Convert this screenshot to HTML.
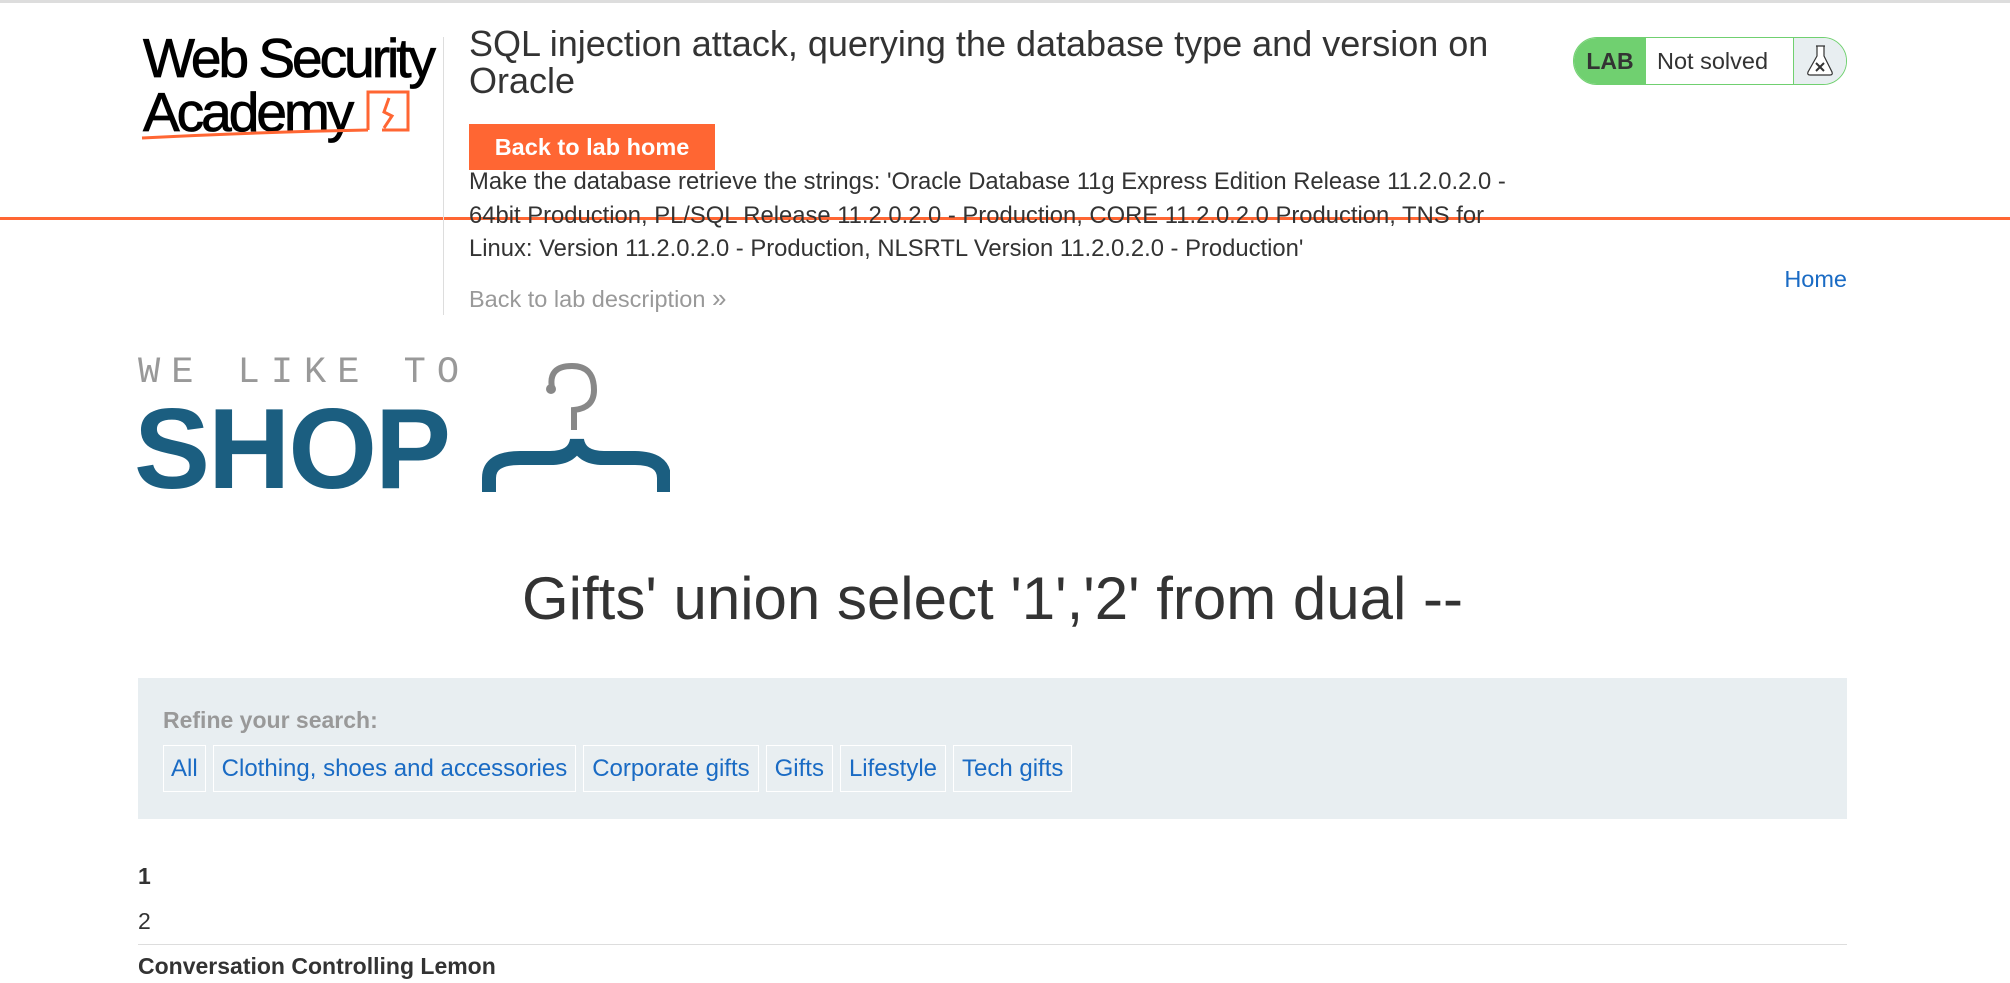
<!DOCTYPE html>
<html><head><meta charset="utf-8"><style>
*{margin:0;padding:0;box-sizing:border-box}
body{width:2010px;height:983px;overflow:hidden;background:#fff;font-family:"Liberation Sans",Arial,sans-serif;color:#333;position:relative}
.a{position:absolute;white-space:nowrap}
</style></head><body>
<div class="a" style="left:0;top:0;width:2010px;height:3px;background:#ddd"></div>
<div class="a" style="left:0;top:217px;width:2010px;height:3px;background:#ff6633"></div>
<!-- WSA logo -->
<div class="a" style="left:143px;top:30px;font-size:55px;letter-spacing:-3px;color:#000;line-height:56px;-webkit-text-stroke:0.8px #000">Web Security</div>
<div class="a" style="left:143px;top:84px;font-size:55px;letter-spacing:-3px;color:#000;line-height:56px;-webkit-text-stroke:0.8px #000">Academy</div>
<svg class="a" style="left:140px;top:86px" width="275" height="56" viewBox="0 0 275 56">
<path d="M2 52 Q120 46 228 44" stroke="#ff6633" stroke-width="3" fill="none"/>
<path d="M228 44 V6 H268 V44 H242" stroke="#ff6633" stroke-width="3" fill="none"/>
<path d="M249 12 L244 26 L252 30 L244 42" stroke="#ff6633" stroke-width="3" fill="none"/>
</svg>
<div class="a" style="left:443px;top:37px;width:1px;height:278px;background:#ddd"></div>
<div class="a" style="left:469px;top:25px;font-size:36px;line-height:37px;color:#333">SQL injection attack, querying the database type and version on<br>Oracle</div>
<div class="a" style="left:469px;top:124px;width:246px;height:46px;background:#ff6633;color:#fff;font-weight:bold;font-size:23.5px;line-height:46px;text-align:center">Back to lab home</div>
<div class="a" style="left:469px;top:165px;font-size:23.8px;line-height:33.5px;color:#333">Make the database retrieve the strings: 'Oracle Database 11g Express Edition Release 11.2.0.2.0 -<br>64bit Production, PL/SQL Release 11.2.0.2.0 - Production, CORE 11.2.0.2.0 Production, TNS for<br>Linux: Version 11.2.0.2.0 - Production, NLSRTL Version 11.2.0.2.0 - Production'</div>
<div class="a" style="left:469px;top:283px;font-size:23.5px;color:#999">Back to lab description <span style="font-size:26px">&#187;</span></div>
<!-- badge -->
<div class="a" style="left:1573px;top:37px;width:274px;height:48px;border:1.5px solid #70d070;border-radius:24px;overflow:hidden;background:#fff">
<div class="a" style="left:0;top:0;width:72px;height:46px;background:#70d070;font-weight:bold;font-size:23px;line-height:46px;text-align:center;color:#333">LAB</div>
<div class="a" style="left:83px;top:0;font-size:23.5px;line-height:46px;color:#333">Not solved</div>
<div class="a" style="left:219px;top:0;width:54px;height:46px;background:#e8eef1;border-left:1.5px solid #70d070">
<svg width="30" height="40" style="position:absolute;left:12px;top:6px" viewBox="0 0 30 40"><path d="M10 2h9M11 2v10L2 28q-1 3 2 3h20q3 0 2-3L18 12V2" fill="#fff" stroke="#333" stroke-width="1.2"/><path d="M10 19l8 8M18 19l-8 8" stroke="#333" stroke-width="2"/></svg></div>
</div>
<div class="a" style="right:163px;top:266px;font-size:23.5px;color:#1a6bc4">Home</div>
<!-- shop logo -->
<div class="a" style="left:138px;top:352px;font-family:'Liberation Mono',monospace;font-size:37px;color:#999;letter-spacing:11px">WE LIKE TO</div>
<div class="a" style="left:134px;top:390px;font-weight:bold;font-size:114px;line-height:120px;color:#1b5e80;letter-spacing:-2px">SHOP</div>
<svg class="a" style="left:480px;top:358px" width="190" height="140" viewBox="0 0 190 140">
<path d="M72 30 Q68 8 92 8 Q114 8 114 32 Q114 50 94 52 V72" stroke="#888" stroke-width="6" fill="none"/>
<circle cx="71" cy="31" r="5" fill="#888"/>
<path d="M9 134 V120 Q9 100 40 100 H70 Q94 100 97 82 Q100 100 124 100 H154 Q184 100 184 120 V134" stroke="#1b5e80" stroke-width="14" fill="none"/>
</svg>
<div class="a" style="left:0;width:1985px;text-align:center;top:564px;font-size:60px;color:#333">Gifts' union select '1','2' from dual --</div>
<!-- refine -->
<div class="a" style="left:138px;top:678px;width:1709px;height:141px;background:#e8eef1"></div>
<div class="a" style="left:163px;top:707px;font-size:23px;font-weight:bold;color:#999">Refine your search:</div>
<div class="a" style="top:745px;left:163px;height:47px;display:flex;gap:7px;font-size:24px;color:#1a6bc4">
<span style="border:1px solid #fff;padding:0 7px;line-height:45px">All</span>
<span style="border:1px solid #fff;padding:0 8px;line-height:45px">Clothing, shoes and accessories</span>
<span style="border:1px solid #fff;padding:0 8px;line-height:45px">Corporate gifts</span>
<span style="border:1px solid #fff;padding:0 8px;line-height:45px">Gifts</span>
<span style="border:1px solid #fff;padding:0 8px;line-height:45px">Lifestyle</span>
<span style="border:1px solid #fff;padding:0 8px;line-height:45px">Tech gifts</span>
</div>
<div class="a" style="left:138px;top:863px;font-size:23px;font-weight:bold">1</div>
<div class="a" style="left:138px;top:908px;font-size:23px">2</div>
<div class="a" style="left:138px;top:944px;width:1709px;height:1px;background:#ddd"></div>
<div class="a" style="left:138px;top:953px;font-size:23px;font-weight:bold">Conversation Controlling Lemon</div>
</body></html>
